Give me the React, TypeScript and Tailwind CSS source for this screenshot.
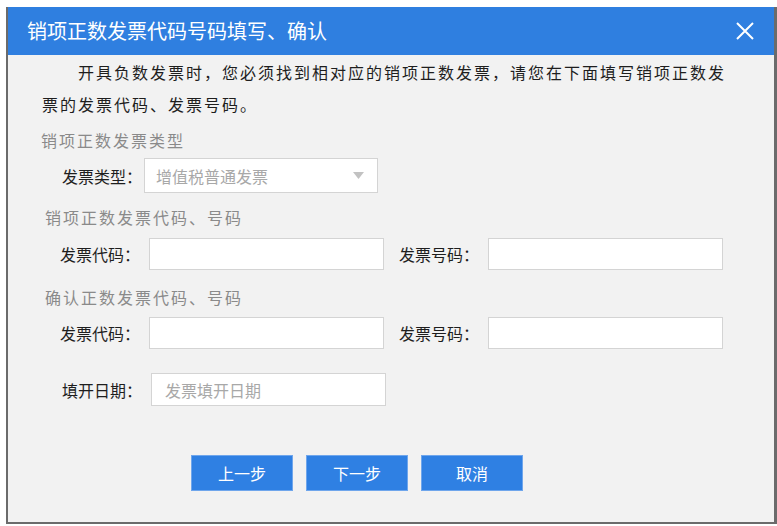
import React from 'react';

const FONT = "font-['Noto_Sans_CJK_SC','Noto_Sans',sans-serif]";

function Field({ label, placeholder }: { label: string; placeholder?: string }) {
  return (
    <div className="flex items-center">
      <span className="w-[80px] text-[16px] text-[#1e1e1e]">{label}</span>
      <input
        type="text"
        placeholder={placeholder}
        className="ml-[9px] h-[32px] w-[235px] border border-[#d4d4d4] bg-white px-[13px] text-[16px] text-[#333] outline-none placeholder:text-[#a8a8a8]"
      />
    </div>
  );
}

export default function App() {
  return (
    <div className={`h-[526px] w-[777px] bg-white pt-[7px] pl-[6px] ${FONT}`}>
      <div className="flex h-[517px] w-[771px] flex-col border-l-2 border-r-[3px] border-b-2 border-[#6b6b6b]">
        <div className="flex h-[48px] shrink-0 items-center justify-between bg-[#2f7fe0] pl-[19px] pr-[19px]">
          <span className="text-[20px] text-white">销项正数发票代码号码填写、确认</span>
          <button className="flex h-[20px] w-[20px] items-center justify-center">
            <svg width="18" height="18" viewBox="0 0 18 18" fill="none" stroke="white" strokeWidth="2">
              <path d="M1 1 L17 17 M17 1 L1 17" />
            </svg>
          </button>
        </div>

        <div className="flex-1 bg-[#f2f2f2] pt-[1px]">
          <p className="ml-[34px] w-[692px] indent-9 text-[16px] leading-[32px] tracking-[2px] text-[#1e1e1e]">
            开具负数发票时，您必须找到相对应的销项正数发票，请您在下面填写销项正数发票的发票代码、发票号码。
          </p>

          <div className="ml-[33px] mt-[8px] text-[16px] leading-[24px] tracking-[2px] text-[#8a8a8a]">
            销项正数发票类型
          </div>

          <div className="ml-[54px] mt-[6px] flex items-center">
            <span className="w-[80px] text-[16px] text-[#1e1e1e]">发票类型：</span>
            <div className="ml-[2px] flex h-[35px] w-[234px] items-center justify-between border border-[#d4d4d4] bg-white pl-[11px] pr-[13px]">
              <span className="text-[16px] text-[#a8a8a8]">增值税普通发票</span>
              <svg width="11" height="7" viewBox="0 0 11 7">
                <path d="M0 0 H11 L5.5 7 Z" fill="#c2c2c2" />
              </svg>
            </div>
          </div>

          <div className="ml-[37px] mt-[12px] text-[16px] leading-[24px] tracking-[2px] text-[#8a8a8a]">
            销项正数发票代码、号码
          </div>
          <div className="ml-[52px] mt-[9px] flex gap-[15px]">
            <Field label="发票代码：" />
            <Field label="发票号码：" />
          </div>

          <div className="ml-[37px] mt-[15px] text-[16px] leading-[24px] tracking-[2px] text-[#8a8a8a]">
            确认正数发票代码、号码
          </div>
          <div className="ml-[52px] mt-[8px] flex gap-[15px]">
            <Field label="发票代码：" />
            <Field label="发票号码：" />
          </div>

          <div className="ml-[54px] mt-[24px] flex items-center">
            <span className="w-[80px] text-[16px] text-[#1e1e1e]">填开日期：</span>
            <input
              type="text"
              placeholder="发票填开日期"
              className="ml-[9px] h-[33px] w-[235px] border border-[#d4d4d4] bg-white px-[13px] text-[16px] outline-none placeholder:text-[#a8a8a8]"
            />
          </div>

          <div className="ml-[183px] mt-[49px] flex gap-[13px]">
            {['上一步', '下一步', '取消'].map((t) => (
              <button
                key={t}
                className="h-[36px] w-[102px] border border-[#6fa6ec] bg-[#2f80e3] text-[16px] text-white"
              >
                {t}
              </button>
            ))}
          </div>
        </div>
      </div>
    </div>
  );
}
